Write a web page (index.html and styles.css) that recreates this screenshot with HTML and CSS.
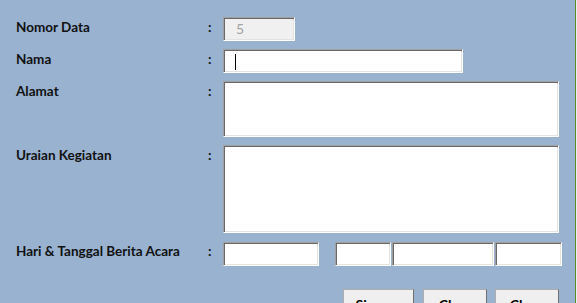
FILE: index.html
```html
<!DOCTYPE html>
<html lang="en">
<head>
  <meta charset="UTF-8">
  <title>Berita Acara</title>
  <link rel="stylesheet" href="styles.css">
</head>
<body>

  <div class="window">
    <div class="form">
      <span class="label">Nomor Data</span>
      <span class="colon">:</span>
      <div class="field nomor disabled">5</div>

      <span class="label">Nama</span>
      <span class="colon">:</span>
      <div class="field nama"><span class="caret"></span></div>

      <span class="label">Alamat</span>
      <span class="colon">:</span>
      <div class="field alamat"></div>

      <span class="label">Uraian Kegiatan</span>
      <span class="colon">:</span>
      <div class="field uraian"></div>

      <span class="label">Hari &amp; Tanggal Berita Acara</span>
      <span class="colon">:</span>
      <div class="dates">
        <div class="field hari"></div>
        <div class="tanggal">
          <div class="field tgl"></div>
          <div class="field bulan"></div>
          <div class="field tahun"></div>
        </div>
      </div>
    </div>

    <div class="buttons">
      <div class="btn save">Simpan</div>
      <div class="btn clear">Clear</div>
      <div class="btn close">Close</div>
    </div>
  </div>

</body>
</html>
```

FILE: styles.css
```css
body {
  margin: 0;
  background-color: #e9eef4;
  font-family: Lato, "Open Sans", sans-serif;
}

.window {
  width: 575px;
  height: 303px;
  background-color: #98b2d0;
  border-right: 1px solid #5e8a22;
  overflow: hidden;
}

.form {
  display: grid;
  grid-template-columns: 192px 15px auto;
  row-gap: 8px;
  padding: 17px 0 0 16px;
  align-items: start;
}

.label,
.colon {
  font-size: 13.5px;
  font-weight: bold;
  color: #111;
  line-height: 16px;
  padding-top: 2px;
}

.field {
  box-sizing: border-box;
  background-color: #fff;
  border: 1px solid;
  border-color: #a0a0a0 #fff #fff #a0a0a0;
  box-shadow: inset 1px 1px 0 #696969, inset -1px -1px 0 #e3e3e3;
  height: 24px;
}

.disabled {
  background-color: #f0f0f0;
  color: #a3a3a3;
  font-size: 14px;
  line-height: 22px;
  padding-left: 12px;
}

.nomor { width: 72px; }
.nama { width: 240px; padding: 4px 0 0 11px; }
.alamat { width: 336px; height: 56px; }
.uraian { width: 336px; height: 88px; }

.caret {
  display: block;
  width: 1px;
  height: 16px;
  background-color: #000;
}

.dates {
  display: flex;
  gap: 16px;
  margin-top: 1px;
}

.tanggal {
  display: flex;
  gap: 1px;
}

.hari { width: 96px; }
.tgl { width: 56px; }
.bulan { width: 102px; }
.tahun { width: 67px; }

.buttons {
  display: flex;
  gap: 8px;
  padding: 23px 0 0 343px;
}

.btn {
  box-sizing: border-box;
  width: 64px;
  height: 30px;
  background-color: #efefef;
  border: 1px solid #adadad;
  border-right-color: #707070;
  border-bottom-color: #707070;
  font-size: 14px;
  font-weight: bold;
  line-height: 16px;
  color: #000;
  padding-top: 7px;
  text-align: center;
}

.save { width: 71px; margin-right: 1px; }
```
